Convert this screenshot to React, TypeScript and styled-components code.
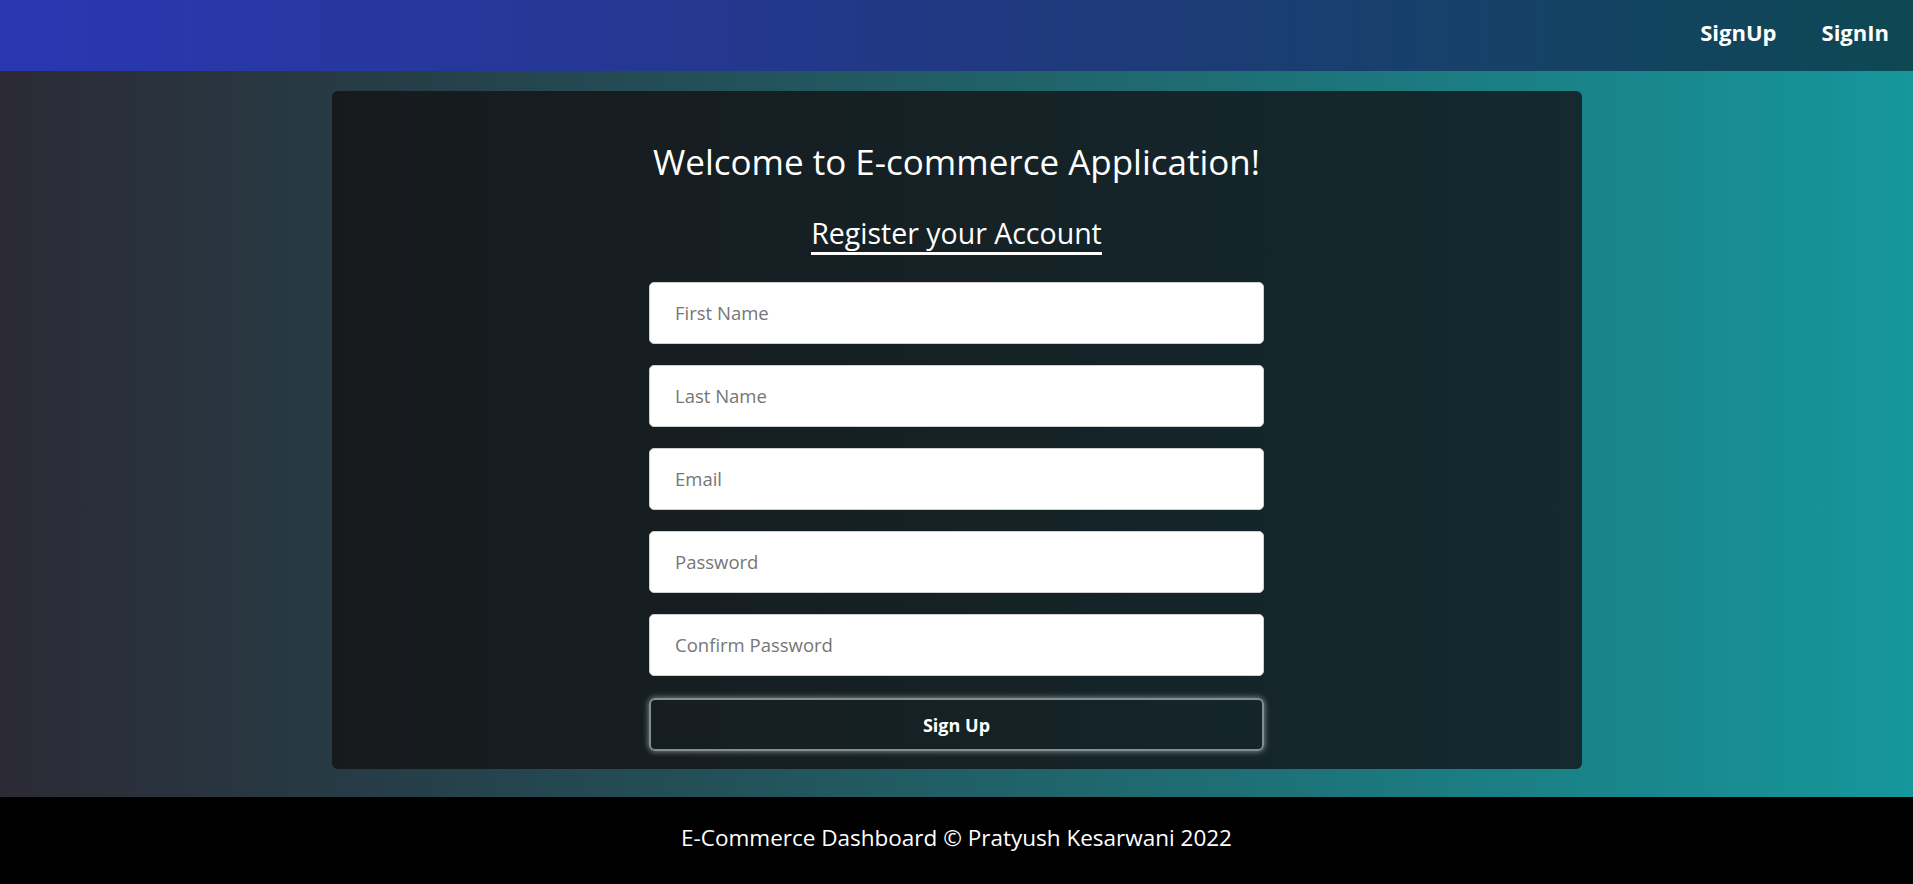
import React from "react";
import styled, { createGlobalStyle } from "styled-components";

const GlobalStyle = createGlobalStyle`
  * { box-sizing: border-box; }
  html, body { margin: 0; padding: 0; }
  body {
    font-family: "Open Sans", "Noto Sans", "DejaVu Sans", sans-serif;
    background: linear-gradient(to right, #2c2a35 0%, #263d47 20%, #1f6a70 60%, #15979c 100%);
    min-height: 100vh;
  }
`;

const Page = styled.div`
  display: flex;
  flex-direction: column;
  min-height: 884px;
`;

const NavBar = styled.nav`
  height: 71px;
  display: flex;
  justify-content: flex-end;
  align-items: center;
  gap: 45px;
  padding: 0 24px 7px 0;
  background: linear-gradient(to right, #2a37b3 0%, #213882 50%, #0d4853 100%);
`;

const NavLink = styled.a`
  color: #ffffff;
  font-size: 22px;
  font-weight: 700;
  line-height: 30px;
  text-decoration: none;
  cursor: pointer;
`;

const Main = styled.main`
  flex: 1;
  padding: 20px 0 28px;
`;

const Card = styled.section`
  width: 1250px;
  margin: 0 auto;
  height: 678px;
  border-radius: 6px;
  background: linear-gradient(to right, #171a1d 0%, #161e22 30%, #132a2e 100%);
  display: flex;
  flex-direction: column;
  align-items: center;
  padding: 46px 0 19px;
`;

const Title = styled.h1`
  margin: 0;
  color: #ffffff;
  font-size: 35px;
  font-weight: 400;
  line-height: 50px;
`;

const Subtitle = styled.h2`
  margin: 29px 0 0;
  color: #ffffff;
  font-size: 28.5px;
  font-weight: 400;
  line-height: 34px;
  padding-bottom: 2px;
  border-bottom: 3px solid #ffffff;
`;

const Form = styled.form`
  margin-top: 27px;
  width: 615px;
  display: flex;
  flex-direction: column;
  gap: 21px;
`;

const Input = styled.input`
  height: 62px;
  width: 100%;
  border: 1px solid #cfcfcf;
  border-radius: 5px;
  background: #ffffff;
  padding: 0 25px 2px;
  font-family: inherit;
  font-size: 18.5px;
  color: #333;
  outline: none;
  &::placeholder { color: #767676; }
`;

const SubmitButton = styled.button`
  margin-top: 1px;
  height: 53px;
  width: 100%;
  border: 2px solid #7f8f92;
  border-radius: 6px;
  background: transparent;
  box-shadow: 0 0 6px rgba(255, 255, 255, 0.55);
  color: #ffffff;
  font-family: inherit;
  font-size: 18px;
  font-weight: 700;
  cursor: pointer;
`;

const Footer = styled.footer`
  height: 87px;
  background: #000000;
  display: flex;
  align-items: center;
  justify-content: center;
  padding-bottom: 7px;
  color: #ffffff;
  font-size: 22.5px;
`;

const fields = ["First Name", "Last Name", "Email", "Password", "Confirm Password"];

export default function App() {
  return (
    <>
      <GlobalStyle />
      <Page>
        <NavBar>
          <NavLink>SignUp</NavLink>
          <NavLink>SignIn</NavLink>
        </NavBar>
        <Main>
          <Card>
            <Title>Welcome to E-commerce Application!</Title>
            <Subtitle>Register your Account</Subtitle>
            <Form onSubmit={(e) => e.preventDefault()}>
              {fields.map((f) => (
                <Input
                  key={f}
                  type={f.includes("Password") ? "password" : f === "Email" ? "email" : "text"}
                  placeholder={f}
                />
              ))}
              <SubmitButton type="submit">Sign Up</SubmitButton>
            </Form>
          </Card>
        </Main>
        <Footer>E-Commerce Dashboard © Pratyush Kesarwani 2022</Footer>
      </Page>
    </>
  );
}
